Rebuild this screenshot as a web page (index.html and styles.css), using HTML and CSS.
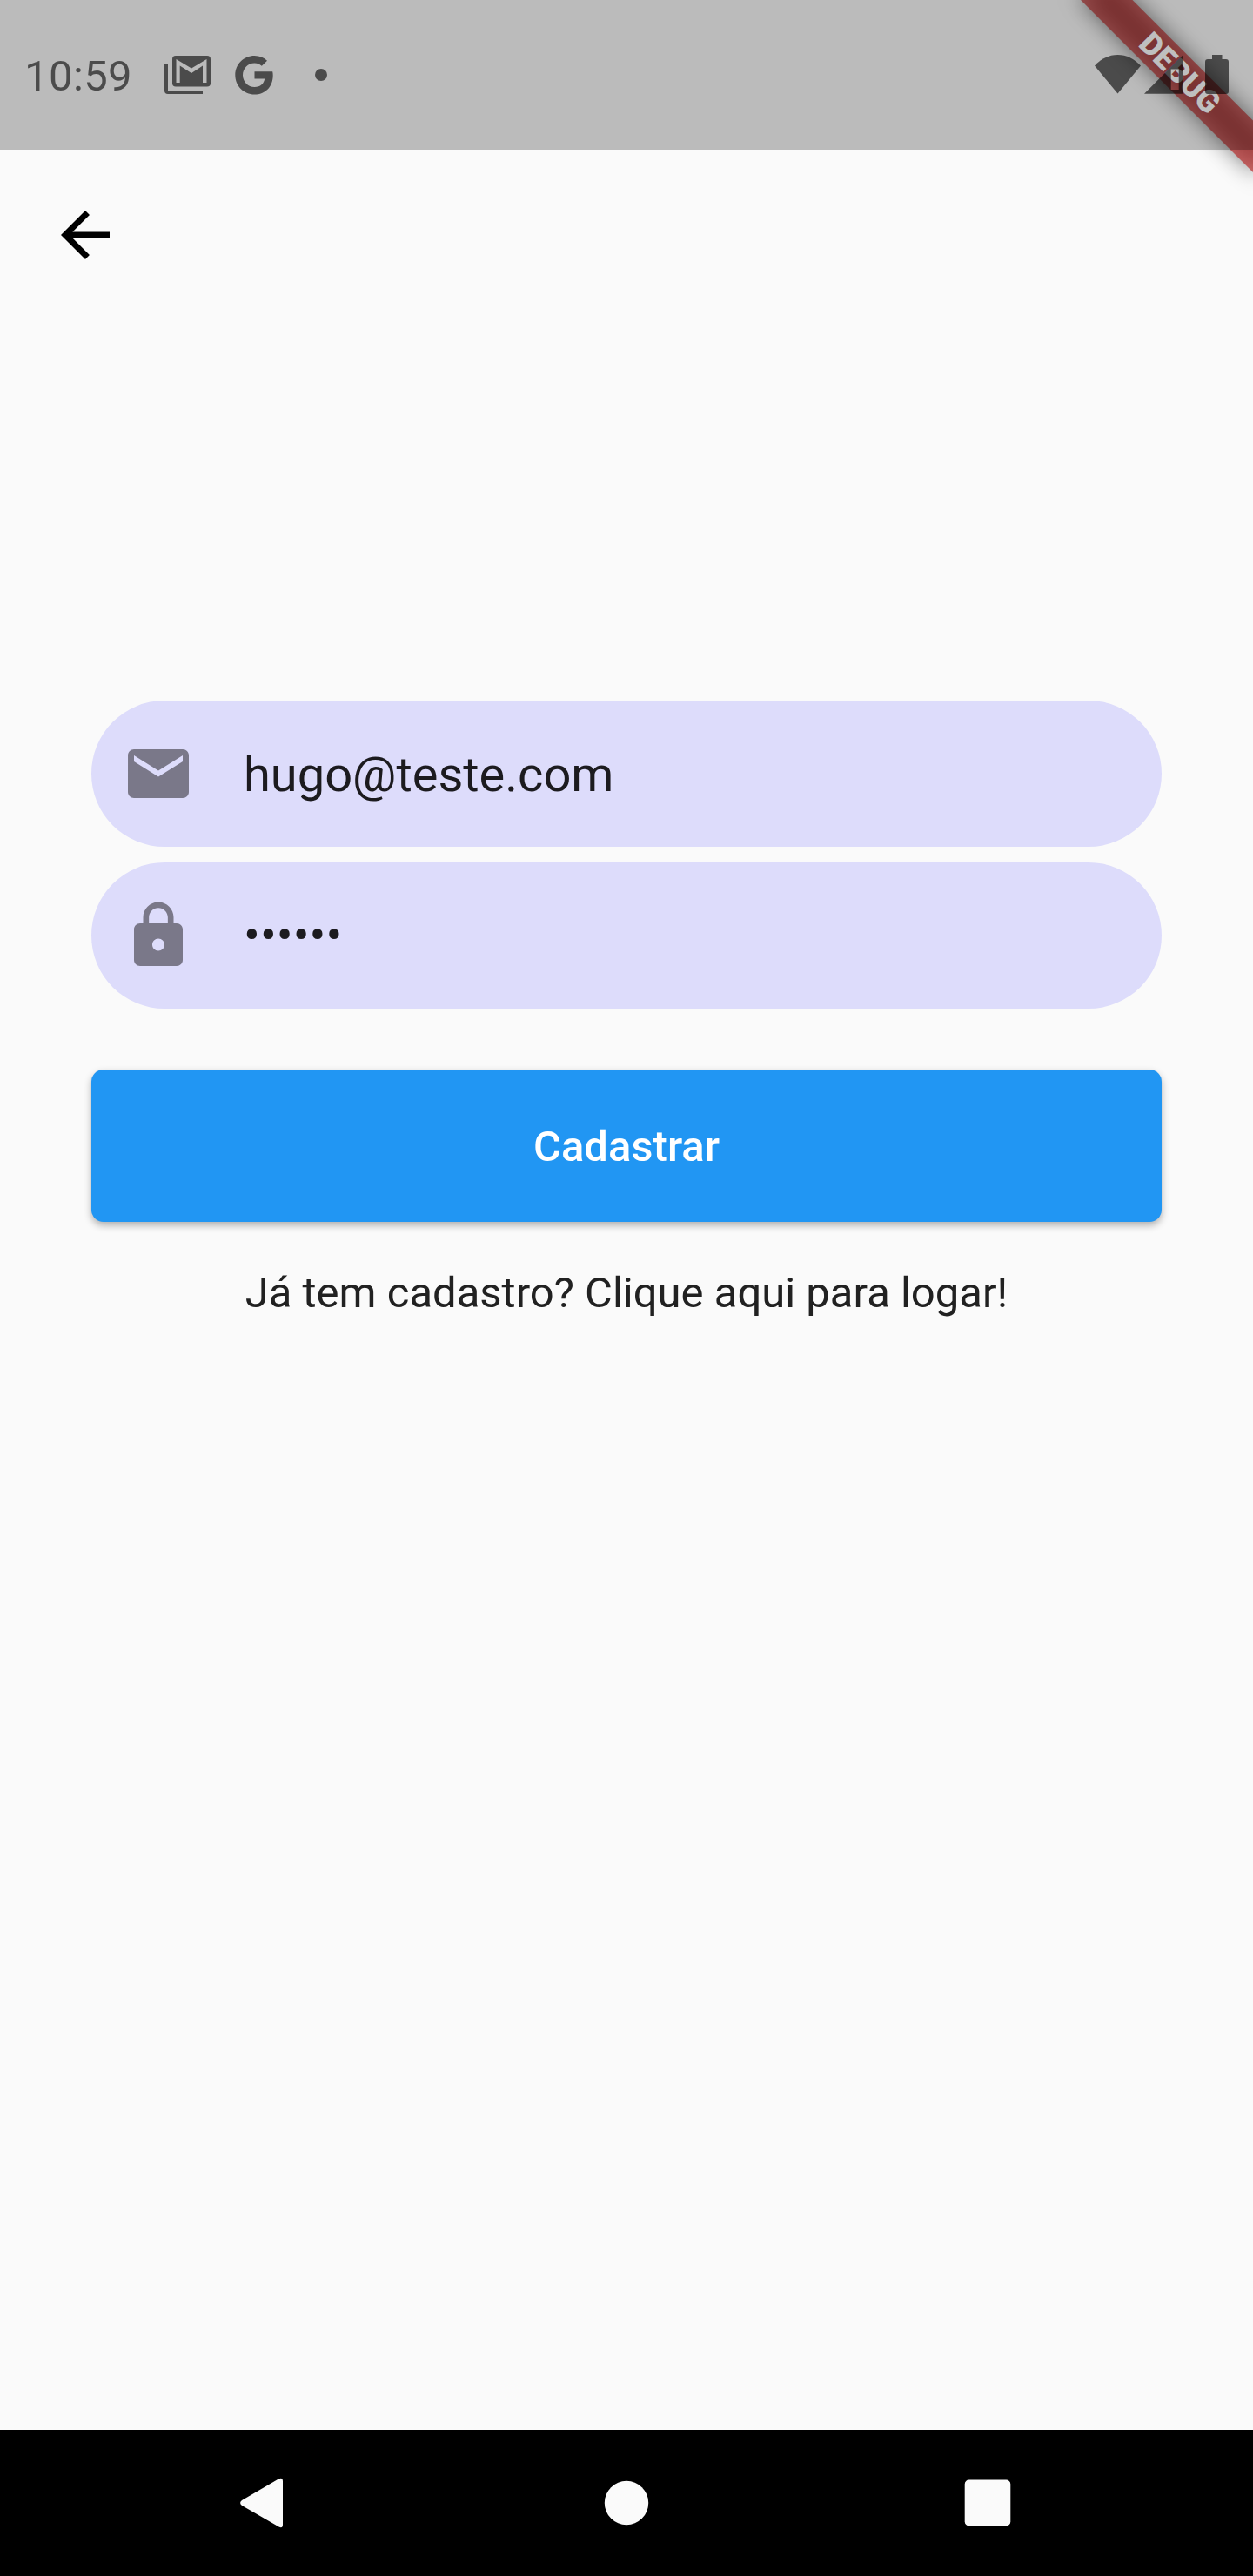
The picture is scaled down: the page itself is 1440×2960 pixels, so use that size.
FILE: index.html
```html
<!DOCTYPE html>
<html lang="pt-BR">
<head>
<meta charset="utf-8">
<title>Cadastro</title>
<link rel="stylesheet" href="styles.css">
</head>
<body>
<div class="screen">
  <div class="debug" aria-hidden="true"><div class="debug-shadow"></div><div class="debug-label">DEBUG</div></div>
  <header class="status">
    <span class="clock">10:59</span>
    <svg class="i-mail" width="54" height="46" viewBox="0 0 54 46"><path fill-rule="evenodd" d="M13 1H49Q53 1 53 5V32.500Q53 36.500 49 36.500H13Q9 36.500 9 32.500V5Q9 1 13 1ZM13.500 5V32H17.700V12.500L31 21L44 12.500V32H48.500V5L31 15.500Z"/><path d="M0 10H4V41H44V45H4Q0 45 0 41Z"/></svg>
    <svg class="i-g" width="45" height="46" viewBox="0 0 45 46"><path d="M22.500 1C28.500 1 33 3.200 37 6.800L30.800 12.800C28.600 10.700 25.900 9.500 22.500 9.500C15 9.500 9 15.700 9 23.200S15 37 22.500 37C29.500 37 33.200 33 34.200 27.500H22.500V19.200H43.200C43.500 20.500 43.700 22 43.700 23.700C43.700 36.500 35 45.500 22.500 45.500C10 45.500 .3 35.500 .3 23.200S10 1 22.500 1Z"/></svg>
    <span class="dot"></span>
    <div class="sys">
      <svg width="53" height="45" viewBox="0 0 53 45"><path d="M0 12.500C7.500 4.500 16.500 0 26.500 0S45.500 4.500 53 12.500L26.500 44.500Z"/></svg>
      <svg width="45" height="45" viewBox="0 0 45 45"><path fill-rule="evenodd" d="M0 44.800L44.700 0V44.800ZM30.700 16.500V40H39.700V16.500Z"/></svg>
      <svg class="i-bat" width="27" height="45" viewBox="0 0 27 45"><path d="M8 0H19.500V5H24Q27 5 27 8V42Q27 45 24 45H3Q0 45 0 42V8Q0 5 3 5H8Z"/></svg>
    </div>
  </header>
  <div class="appbar">
    <svg width="84" height="84" viewBox="0 0 24 24"><path d="M20 11H7.830l5.590-5.590L12 4l-8 8 8 8 1.410-1.410L7.830 13H20v-2z"/></svg>
  </div>
  <main class="form">
    <div class="field">
      <svg width="84" height="84" viewBox="0 0 24 24"><path d="M20 4H4c-1.100 0-1.990.9-1.990 2L2 18c0 1.100.9 2 2 2h16c1.100 0 2-.9 2-2V6c0-1.100-.9-2-2-2zm0 4l-8 5-8-5V6l8 5 8-5v2z"/></svg>
      <span class="value email">hugo@teste.com</span>
    </div>
    <div class="field">
      <svg width="84" height="84" viewBox="0 0 24 24"><path d="M18 8h-1V6c0-2.760-2.240-5-5-5S7 3.240 7 6v2H6c-1.100 0-2 .9-2 2v10c0 1.100.9 2 2 2h12c1.100 0 2-.9 2-2V10c0-1.100-.9-2-2-2zm-6 9c-1.100 0-2-.9-2-2s.9-2 2-2 2 .9 2 2-.9 2-2 2zm3.100-9H8.900V6c0-1.710 1.390-3.100 3.100-3.100 1.710 0 3.100 1.390 3.100 3.100v2z"/></svg>
      <span class="value">••••••</span>
    </div>
    <button class="submit">Cadastrar</button>
    <p class="login">Já tem cadastro? Clique aqui para logar!</p>
  </main>
  <nav class="nav">
    <svg width="70" height="70" viewBox="0 0 70 70"><path d="M8 32L50.500 7.300Q54.800 5.200 55 10V60Q54.800 64.800 50.500 62.500L8 38Q4.200 35 8 32Z"/></svg>
    <svg width="70" height="70" viewBox="0 0 70 70"><circle cx="35" cy="35" r="25.200"/></svg>
    <svg width="70" height="70" viewBox="0 0 70 70"><rect x="8.700" y="8.500" width="52.600" height="53" rx="5"/></svg>
  </nav>
</div>
</body>
</html>
```
FILE: styles.css
```css
body { margin: 0; font-family: Roboto, "Liberation Sans", sans-serif; }
svg { display: block; flex: none; }
.screen {
  position: relative;
  width: 1440px;
  height: 2960px;
  overflow: hidden;
  display: flex;
  flex-direction: column;
  background: #fafafa;
}
.status {
  position: relative;
  box-sizing: border-box;
  height: 172px;
  padding: 0 28px;
  display: flex;
  align-items: center;
  background: rgba(0, 0, 0, .25);
  fill: rgba(0, 0, 0, .6);
}
.clock { width: 161px; font-size: 49px; line-height: 58px; letter-spacing: .4px; color: rgba(0, 0, 0, .6); margin-top: 3px; }
.i-g { margin-left: 27px; }
.dot { width: 14px; height: 14px; margin-left: 47px; border-radius: 50%; background: rgba(0, 0, 0, .6); }
.sys { display: flex; margin: 0 0 1px auto; gap: 4px; }
.sys .i-bat { margin-left: 21px; }
.debug {
  position: absolute;
  top: 98px;
  left: 1300px;
  width: 280px;
  height: 42px;
  transform: rotate(45deg);
  transform-origin: 140px -98px;
}
.debug-shadow { position: absolute; inset: 0; background: rgba(0, 0, 0, .5); filter: blur(12.600px); }
.debug-label {
  position: relative;
  background: rgba(183, 28, 28, .627);
  color: #fff;
  font-size: 35.700px;
  font-weight: 900;
  line-height: 42px;
  text-align: center;
}
.appbar { height: 196px; padding-left: 56px; display: flex; align-items: center; }
.form { flex: 1; padding: 437px 105px 0; display: flex; flex-direction: column; }
.field {
  height: 168px;
  margin-bottom: 17.500px;
  padding-left: 35px;
  border-radius: 84px;
  display: flex;
  align-items: center;
  gap: 56px;
  background: #dddcfb;
  fill: #7a7889;
}
.value { font-size: 56px; color: #1c1b1f; }
.email { padding-top: 2px; }
.submit {
  height: 175px;
  margin-top: 52.500px;
  padding: 2px 0 0;
  border: 0;
  border-radius: 14px;
  background: #2196f3;
  color: #fff;
  font: 500 49px Roboto, sans-serif;
  box-shadow: 0 4px 8px rgba(0, 0, 0, .3);
}
.login {
  margin: 53px 0 0;
  font-size: 49px;
  line-height: 58px;
  text-align: center;
  color: #212121;
}
.nav {
  height: 168px;
  padding: 0 270px;
  display: flex;
  justify-content: space-between;
  align-items: center;
  background: #000;
  fill: #fafafa;
}
```
